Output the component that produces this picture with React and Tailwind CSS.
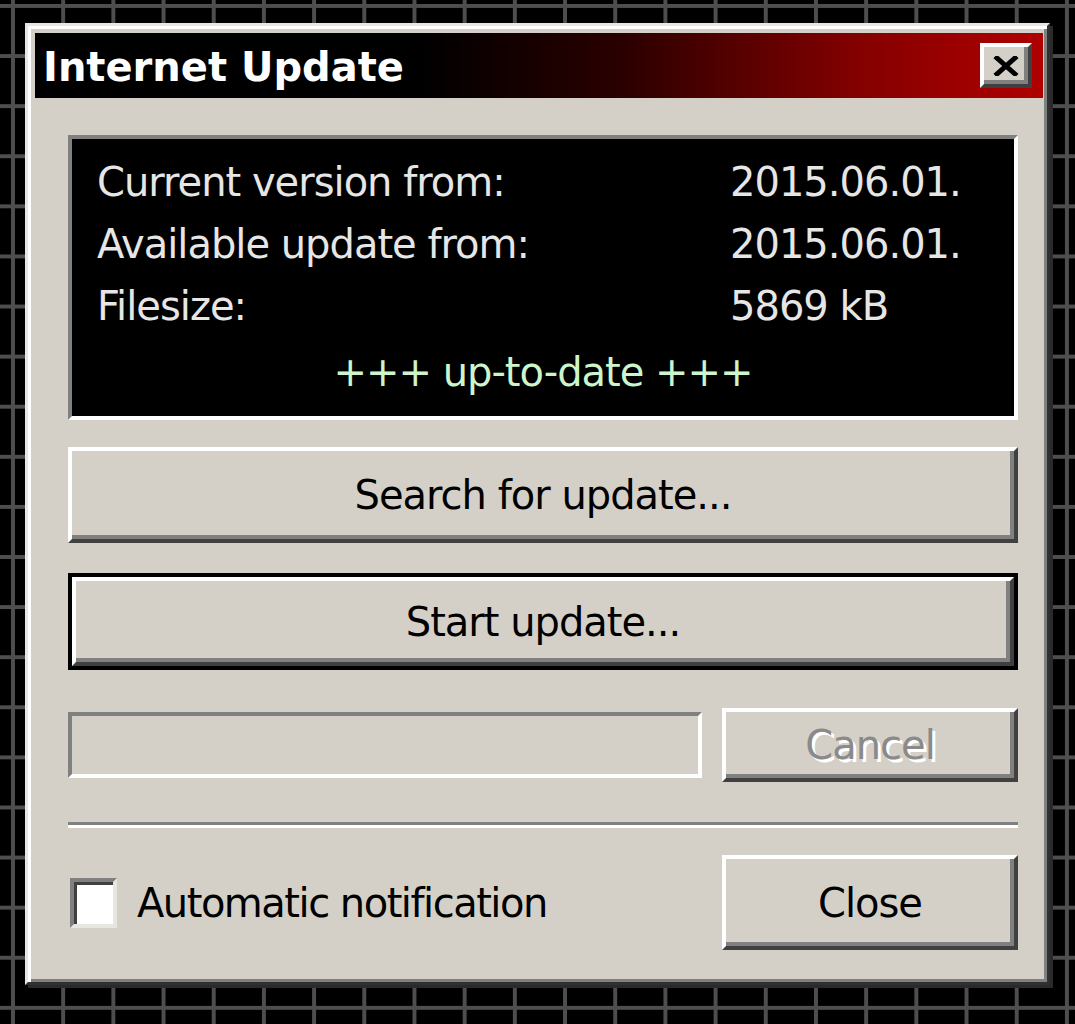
import React from 'react';

const raised = "bg-[#d4d0c8] border-[4px] border-t-white border-l-white border-r-[#404040] border-b-[#404040] shadow-[inset_-4px_-4px_0_#808080]";
const sunken = "border-[4px] border-t-[#808080] border-l-[#808080] border-r-white border-b-white";

function WinButton({ children, isDefault, disabled, className = '' }) {
  const face = (
    <div className={`${raised} h-full w-full flex items-center justify-center`}>
      <span className={disabled ? "text-[#8a8a8a] [text-shadow:3px_3px_0_#ffffff]" : "text-black"}>{children}</span>
    </div>
  );
  if (isDefault) {
    return <div className={`border-[4px] border-black ${className}`}>{face}</div>;
  }
  return <div className={className}>{face}</div>;
}

export default function App() {
  const rows = [
    { label: 'Current version from:', value: '2015.06.01.' },
    { label: 'Available update from:', value: '2015.06.01.' },
    { label: 'Filesize:', value: '5869 kB' },
  ];

  return (
    <div className="w-[1075px] h-[1024px] bg-black bg-[linear-gradient(to_right,#4e4e4e_4px,transparent_4px),linear-gradient(to_bottom,#4e4e4e_4px,transparent_4px)] bg-[size:50.2px_50.1px] bg-[position:11px_4px] pt-[23px] pl-[25px] font-['DejaVu_Sans',sans-serif] text-[40px] tracking-[-1px]">
      <div className="w-[1025px] h-[962px] bg-[#d4d0c8] border-[3px] border-t-[#e8e6e0] border-l-[#e8e6e0] border-r-[#303030] border-b-[#303030] shadow-[inset_3px_3px_0_#ffffff,inset_-3px_-3px_0_#808080,3px_3px_0_#2a2a2a] pt-[7px] pl-[7px] pr-[4px] flex flex-col">
        {/* title bar */}
        <div className="h-[65px] flex items-center justify-between bg-[linear-gradient(to_right,#000000_0%,#000000_38%,#2a0000_58%,#850000_82%,#b00000_100%)]">
          <span className="pl-[8px] pt-[2px] text-white font-bold tracking-normal leading-none">Internet Update</span>
          <div className={`${raised} w-[52px] h-[45px] mr-[11px] flex items-center justify-center`}>
            <svg width="26" height="20" viewBox="0 0 26 20">
              <path d="M4 2 L22 18 M22 2 L4 18" stroke="#000" strokeWidth="5" strokeLinecap="square" />
            </svg>
          </div>
        </div>

        {/* body */}
        <div className="pl-[33px] pr-[25px] pt-[37px] flex flex-col">
          <div className={`${sunken} h-[285px] bg-black pt-[12px] pl-[25px] text-[#e6e6e6]`}>
            {rows.map(r => (
              <div key={r.label} className="h-[62px] flex items-center">
                <span className="w-[633px]">{r.label}</span>
                <span>{r.value}</span>
              </div>
            ))}
            <div className="h-[62px] mt-[4px] flex items-center justify-center pr-[25px] text-[#ccf5cc]">+++ up-to-date +++</div>
          </div>

          <WinButton className="h-[96px] mt-[27px]">Search for update...</WinButton>
          <WinButton isDefault className="h-[97px] mt-[30px]">Start update...</WinButton>

          <div className="mt-[38px] flex items-center gap-[20px]">
            <div className={`${sunken} w-[634px] h-[66px] bg-[#d4d0c8]`}></div>
            <WinButton disabled className="w-[296px] h-[74px]">Cancel</WinButton>
          </div>

          <div className="mt-[40px] h-[6px] border-t-[3px] border-t-[#808080] border-b-[3px] border-b-white"></div>

          <div className="mt-[27px] flex items-center justify-between">
            <div className="flex items-center pl-[2px]">
              <div className="w-[47px] h-[50px] bg-white border-[4px] border-t-[#808080] border-l-[#808080] border-r-[#e8e6e0] border-b-[#e8e6e0] shadow-[inset_3px_3px_0_#404040]"></div>
              <span className="ml-[20px] text-black tracking-[-1.5px]">Automatic notification</span>
            </div>
            <WinButton className="w-[296px] h-[95px]">Close</WinButton>
          </div>
        </div>
      </div>
    </div>
  );
}
